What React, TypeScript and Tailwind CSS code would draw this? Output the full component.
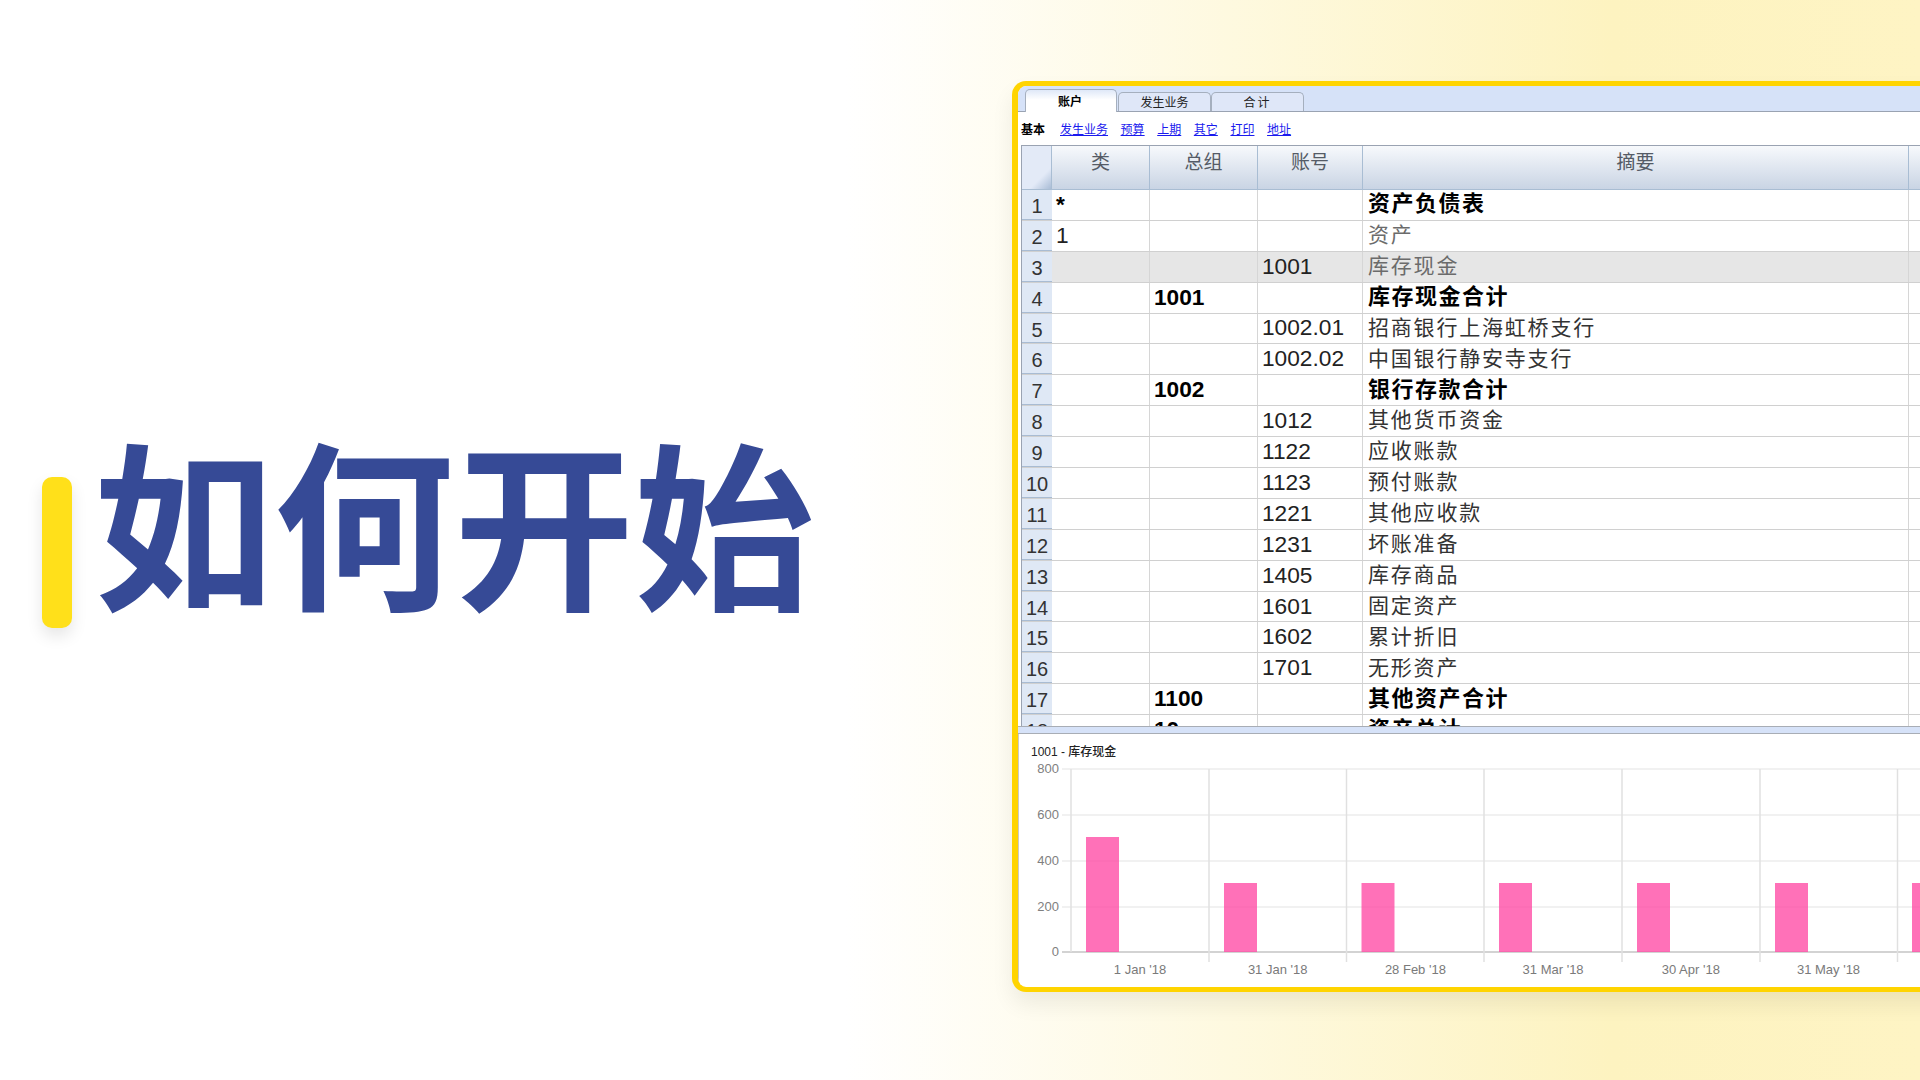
const barX = [1086, 1224, 1361.5, 1499, 1637, 1775, 1912];
const gridX = [1071, 1209, 1346.5, 1484, 1622, 1760, 1897.5];
const xLabels = ["1 Jan '18", "31 Jan '18", "28 Feb '18", "31 Mar '18", "30 Apr '18", "31 May '18"];
const yTicks = [
  { label: "800", y: 769 },
  { label: "600", y: 815 },
  { label: "400", y: 861 },
  { label: "200", y: 907 },
  { label: "0", y: 952 },
];

const rows = [
  { type: "*", bold: true, name: "资产负债表" },
  { type: "1", name: "资产", muted: true },
  { account: "1001", name: "库存现金", muted: true, selected: true },
  { group: "1001", bold: true, name: "库存现金合计" },
  { account: "1002.01", name: "招商银行上海虹桥支行" },
  { account: "1002.02", name: "中国银行静安寺支行" },
  { group: "1002", bold: true, name: "银行存款合计" },
  { account: "1012", name: "其他货币资金" },
  { account: "1122", name: "应收账款" },
  { account: "1123", name: "预付账款" },
  { account: "1221", name: "其他应收款" },
  { account: "1231", name: "坏账准备" },
  { account: "1405", name: "库存商品" },
  { account: "1601", name: "固定资产" },
  { account: "1602", name: "累计折旧" },
  { account: "1701", name: "无形资产" },
  { group: "1100", bold: true, name: "其他资产合计" },
  { group: "10", bold: true, name: "资产总计" },
];

const links = ["发生业务", "预算", "上期", "其它", "打印", "地址"];

const Cell = ({ className = "", children }: { className?: string; children?: React.ReactNode }) => (
  <div className={`shrink-0 h-full flex items-center overflow-hidden pb-[2px] border-r border-[#d6d6d6] ${className}`}>
    {children}
  </div>
);

const HeaderCell = ({ className = "", label }: { className?: string; label?: string }) => (
  <div className={`shrink-0 h-full pt-[4px] text-center text-[19px] leading-[26px] text-[#555b66] border-r border-[#a9bdd3] ${className}`}>
    {label}
  </div>
);

const Chart = () => (
  <svg width="901" height="253" viewBox="1019 734 901 253" className="block">
    <text x="1031" y="756" fontSize="12" fill="#222" fontWeight="500">
      1001 - 库存现金
    </text>
    {yTicks.map((t) => (
      <g key={t.label}>
        <line x1="1062" x2="1920" y1={t.y} y2={t.y} stroke={t.label === "0" ? "#c4c4c4" : "#ececec"} strokeWidth="1.5" />
        <text x="1059" y={t.y + 3.5} fontSize="13" textAnchor="end" fill="#808080">
          {t.label}
        </text>
      </g>
    ))}
    {gridX.map((x, i) => (
      <line key={x} x1={x} x2={x} y1="769" y2={i === 0 ? 952 : 962} stroke="#e0e0e0" strokeWidth="1.5" />
    ))}
    {barX.map((x, i) => (
      <rect key={x} x={x} y={i === 0 ? 837 : 883} width="33" height={i === 0 ? 115 : 69} fill="#ff4da6" fillOpacity="0.8" />
    ))}
    {xLabels.map((l, i) => (
      <text key={l} x={1140 + i * 137.7} y="974" fontSize="13" textAnchor="middle" fill="#7a7a7a">
        {l}
      </text>
    ))}
  </svg>
);

export default function App() {
  return (
    <div className="w-[1920px] h-[1080px] overflow-hidden flex bg-[linear-gradient(90deg,#ffffff_44%,#fdf3c0_84%,#fef4c4_100%)] font-['Liberation_Sans','Noto_Sans_CJK_SC',sans-serif]">
      <div className="w-[1012px] shrink-0 flex items-start pl-[42px]">
        <div className="w-[30px] h-[151px] mt-[477px] shrink-0 rounded-[10px] bg-[#ffe01a] shadow-[0_8px_16px_rgba(0,0,0,0.1)]" />
        <h1 className="ml-[22px] mt-[410px] whitespace-nowrap text-[180px] leading-[216px] font-bold text-[#364a96] font-['Noto_Sans_CJK_SC',sans-serif]">
          如何开始
        </h1>
      </div>

      <div className="mt-[81px] w-[1000px] h-[911px] shrink-0 flex flex-col border-[5px] border-l-[6px] border-r-0 border-[#ffd400] rounded-l-[14px] overflow-hidden bg-white shadow-[0_12px_22px_rgba(0,0,0,0.07)]">
        {/* tabs */}
        <div className="h-[26px] shrink-0 flex items-end pl-[7px] bg-[#d6e2f8] border-b border-[#9aa3b2]">
          <div className="w-[92px] h-[23px] -mb-px pr-[2px] pt-[1px] text-center text-[12px] leading-[22px] font-bold text-black rounded-t-[5px] border border-b-0 border-[#a5afbe] bg-[linear-gradient(#dfe8f8,#ffffff_45%)]">
            账户
          </div>
          <div className="ml-[1px] w-[93px] h-[19px] pt-[1px] text-center text-[12px] leading-[18px] text-[#222] rounded-t-[5px] border border-b-0 border-[#a5afbe] bg-[#dfe7f8]">
            发生业务
          </div>
          <div className="w-[93px] h-[19px] pt-[1px] text-center text-[12px] leading-[18px] tracking-[2px] text-[#222] rounded-t-[5px] border border-b-0 border-[#a5afbe] bg-[#dfe7f8]">
            合计
          </div>
        </div>

        {/* toolbar */}
        <div className="h-[33px] shrink-0 flex items-center pl-[3px] pt-[2px] text-[12px]">
          <span className="font-bold text-black w-[39px]">基本</span>
          <div className="flex gap-[12.6px]">
            {links.map((l) => (
              <a key={l} href="#" className="text-[#1a1aee] underline">
                {l}
              </a>
            ))}
          </div>
        </div>

        {/* table */}
        <div className="h-[581px] shrink-0 ml-[3px] overflow-hidden border-t border-l border-[#9aa3b2]">
          <div className="h-[44px] flex bg-[linear-gradient(#f7f9fc,#c9d4e4)] border-b border-[#a9bdd3]">
            <div className="w-[30px] shrink-0 h-full bg-[linear-gradient(135deg,#e3eaf7_70%,#a9bcd6)] border-r border-[#a9bdd3]" />
            <HeaderCell className="w-[98px]" label="类" />
            <HeaderCell className="w-[108px]" label="总组" />
            <HeaderCell className="w-[105px]" label="账号" />
            <HeaderCell className="w-[546px]" label="摘要" />
          </div>
          {rows.map((r, i) => (
            <div
              key={r.name}
              className={`h-[30.9px] flex border-b border-[#d0d0d0] text-[22.7px] text-[#222] ${r.selected ? "bg-[#e6e6e6]" : "bg-white"}`}
            >
              <div className="w-[30px] shrink-0 h-full flex items-center justify-center pt-[3px] text-[20px] text-[#333] bg-[#dfe8f5] border-b border-[#a9bcd3]">
                {i + 1}
              </div>
              <Cell className={`w-[98px] pl-[4px] ${r.bold ? "font-bold text-black" : ""}`}>{r.type}</Cell>
              <Cell className="w-[108px] pl-[4px] font-bold text-black">{r.group}</Cell>
              <Cell className="w-[105px] pl-[4px]">{r.account}</Cell>
              <Cell
                className={`w-[546px] pl-[5px] ${r.bold ? "text-[22px] tracking-[1.5px] font-bold text-black" : r.muted ? "text-[21px] tracking-[1.8px] text-[#6b6b6b]" : "text-[21px] tracking-[1.8px] text-[#333]"}`}
              >
                {r.name}
              </Cell>
            </div>
          ))}
        </div>

        {/* splitter */}
        <div className="h-[8px] shrink-0 bg-[#d6e2f8] border-y border-[#a8adb5]" />

        {/* chart */}
        <div className="flex-1 min-h-0 overflow-hidden border-l border-[#c8c8c8]">
          <Chart />
        </div>
      </div>
    </div>
  );
}
